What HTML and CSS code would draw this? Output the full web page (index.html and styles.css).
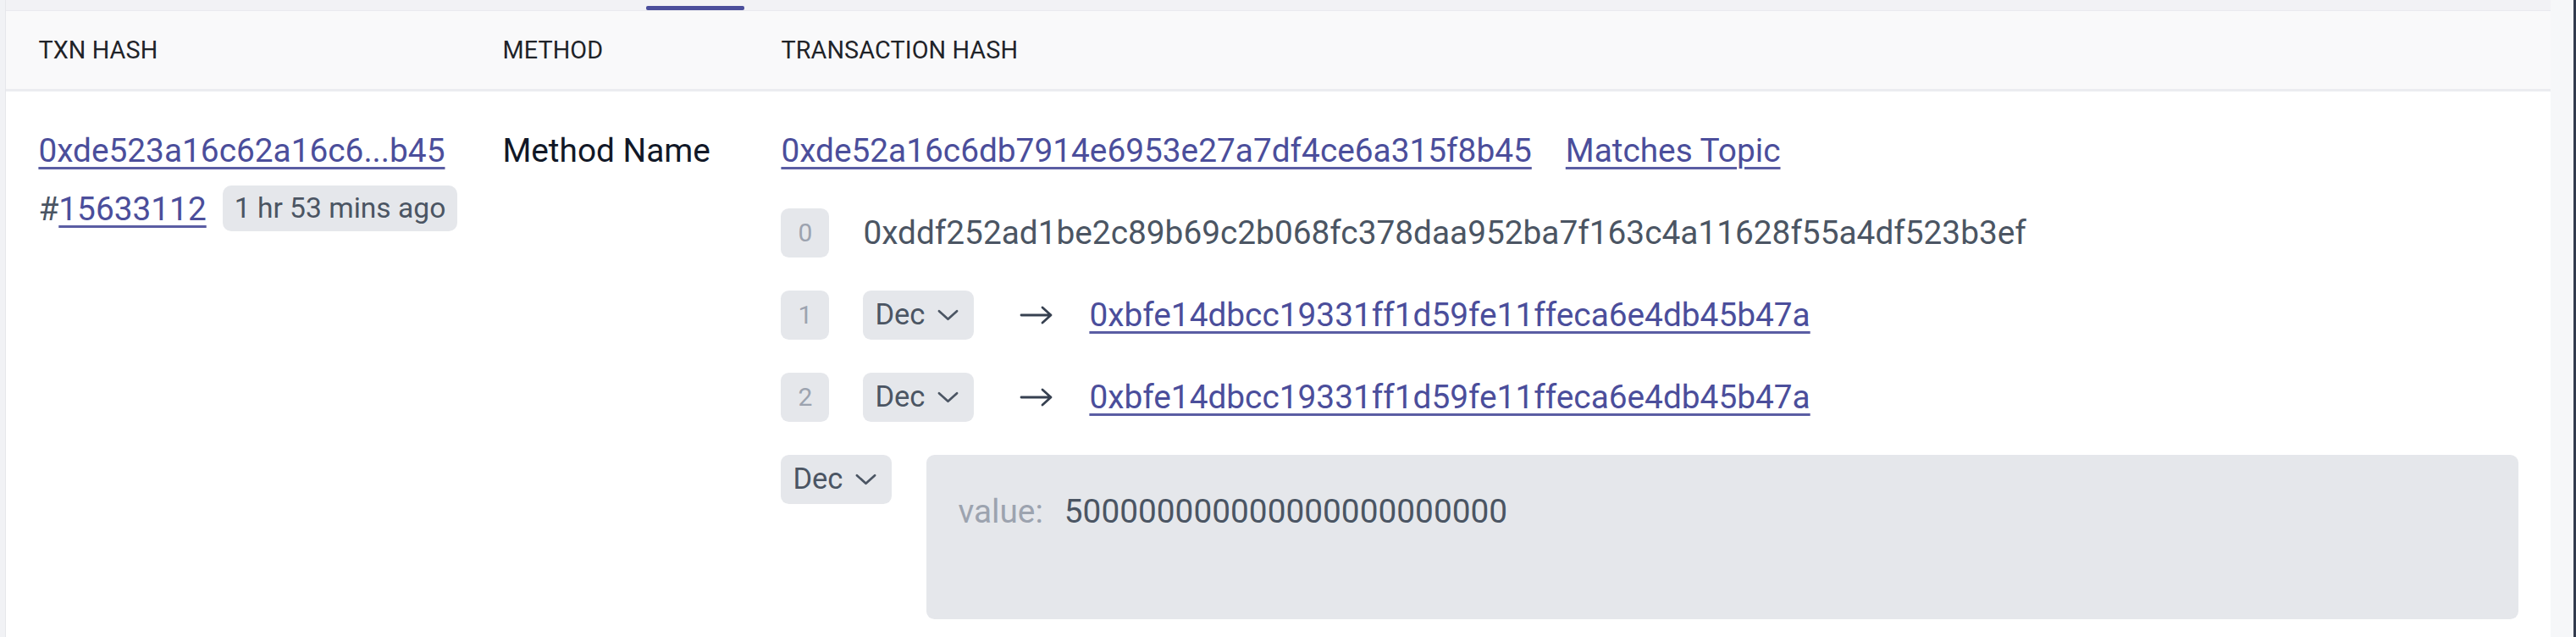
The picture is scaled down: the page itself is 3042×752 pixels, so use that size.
FILE: index.html
```html
<!DOCTYPE html>
<html lang="en">
<head>
<meta charset="utf-8">
<title>Logs</title>
<link rel="stylesheet" href="styles.css">
</head>
<body>
<div class="page">
  <div class="gutter-left"></div>
  <main class="panel">
    <div class="tabbar"><span class="tab-indicator"></span></div>
    <div class="table">
      <div class="thead">
        <div class="th">Txn Hash</div>
        <div class="th">Method</div>
        <div class="th">Transaction Hash</div>
      </div>
      <div class="tr">
        <div class="td col-txn">
          <div class="line"><a class="link" href="#">0xde523a16c62a16c6...b45</a></div>
          <div class="line block-line">
            <span class="hash-sign">#</span><a class="link" href="#">15633112</a>
            <span class="badge">1 hr 53 mins ago</span>
          </div>
        </div>
        <div class="td col-method">
          <div class="line method">Method Name</div>
        </div>
        <div class="td col-logs">
          <div class="log-row">
            <a class="link" href="#">0xde52a16c6db7914e6953e27a7df4ce6a315f8b45</a>
            <a class="link" href="#">Matches Topic</a>
          </div>
          <div class="log-row">
            <span class="idx">0</span>
            <span class="topic-text">0xddf252ad1be2c89b69c2b068fc378daa952ba7f163c4a11628f55a4df523b3ef</span>
          </div>
          <div class="log-row">
            <span class="idx">1</span>
            <span class="dropdown">Dec<svg class="chev" viewBox="0 0 26 14" width="25" height="14"><path d="M2 2 L13 12 L24 2"/></svg></span>
            <svg class="arrow" viewBox="0 0 40 24" width="40" height="24"><path d="M2 12 H37 M27 3 L37 12 L27 21"/></svg>
            <a class="link" href="#">0xbfe14dbcc19331ff1d59fe11ffeca6e4db45b47a</a>
          </div>
          <div class="log-row">
            <span class="idx">2</span>
            <span class="dropdown">Dec<svg class="chev" viewBox="0 0 26 14" width="25" height="14"><path d="M2 2 L13 12 L24 2"/></svg></span>
            <svg class="arrow" viewBox="0 0 40 24" width="40" height="24"><path d="M2 12 H37 M27 3 L37 12 L27 21"/></svg>
            <a class="link" href="#">0xbfe14dbcc19331ff1d59fe11ffeca6e4db45b47a</a>
          </div>
          <div class="log-row data-row">
            <span class="dropdown">Dec<svg class="chev" viewBox="0 0 26 14" width="25" height="14"><path d="M2 2 L13 12 L24 2"/></svg></span>
            <div class="data-box">
              <span class="data-label">value:</span>
              <span class="data-value">500000000000000000000000</span>
            </div>
          </div>
        </div>
      </div>
    </div>
  </main>
  <div class="gutter-right"></div>
</div>
</body>
</html>
```

FILE: styles.css
```css
* { box-sizing: border-box; }

html, body {
  margin: 0;
  padding: 0;
  background: #f6f7f9;
}

body {
  font-family: Roboto, "Liberation Sans", Arial, sans-serif;
  color: #111827;
  width: 3042px;
  height: 752px;
  overflow: hidden;
}

.page {
  display: flex;
  width: 3042px;
  height: 752px;
}

.gutter-left {
  width: 7px;
  flex: none;
  background: #f1f2f5;
  border-right: 1px solid #e7e8ec;
}

.gutter-right {
  width: 30px;
  flex: none;
  background: #f6f7f9;
  border-right: 3px solid #323b4e;
}

.panel {
  flex: 1;
  min-width: 0;
  display: flex;
  flex-direction: column;
  background: #ffffff;
  box-shadow: 2px 0 4px rgba(0, 0, 0, 0.04);
}

.tabbar {
  height: 13px;
  background: #f2f2f5;
  padding-left: 756px;
  display: flex;
  align-items: flex-start;
}

.tab-indicator {
  display: block;
  width: 116px;
  height: 5px;
  margin-top: 7px;
  background: #4b4e9b;
  border-radius: 2px;
}

.thead {
  display: grid;
  grid-template-columns: 548px 329px 1fr;
  height: 96px;
  background: #f9f9fa;
  border-top: 1px solid #eaeaef;
  border-bottom: 3px solid #ebecf0;
  align-items: center;
}

.th {
  padding: 0 38.4px;
  font-size: 28.8px;
  text-transform: uppercase;
  color: #1f2328;
  letter-spacing: 0.1px;
}

.tr {
  display: grid;
  grid-template-columns: 548px 329px 1fr;
  align-items: start;
  padding-top: 41px;
  padding-bottom: 40px;
}

.td {
  padding: 0 38.4px;
  font-size: 38.8px;
  line-height: 57.6px;
}

.line {
  display: flex;
  align-items: center;
  white-space: nowrap;
}

.block-line {
  margin-top: 11px;
}

.link {
  color: #4b4e9b;
  text-decoration: underline;
  text-decoration-thickness: 3px;
  text-underline-offset: 6px;
  text-decoration-color: #5a5da3;
}

.hash-sign {
  color: #4b5563;
}

.badge {
  margin-left: 19px;
  background: #e5e7eb;
  color: #4b5563;
  font-size: 33.6px;
  line-height: 50px;
  padding: 2px 14px;
  border-radius: 10px;
}

.method {
  color: #111827;
}

.col-logs {
  display: flex;
  flex-direction: column;
  gap: 39.4px;
}

.log-row {
  display: flex;
  align-items: center;
  gap: 40px;
  white-space: nowrap;
  height: 57.6px;
}

.idx {
  width: 57px;
  height: 57.6px;
  flex: none;
  display: flex;
  align-items: center;
  justify-content: center;
  background: #e5e7eb;
  border-radius: 9.6px;
  color: #9ca3af;
  font-size: 30px;
}

.topic-text {
  color: #4b5563;
}

.dropdown {
  display: inline-flex;
  align-items: center;
  gap: 15px;
  height: 57.6px;
  padding: 0 18px 0 14px;
  background: #e5e7eb;
  border-radius: 9.6px;
  color: #4b5563;
  font-size: 34.5px;
  flex: none;
}

.chev {
  fill: none;
  stroke: #4b5563;
  stroke-width: 2.8;
  stroke-linecap: round;
  stroke-linejoin: round;
}

.arrow {
  fill: none;
  stroke: #374151;
  stroke-width: 2.8;
  stroke-linecap: round;
  stroke-linejoin: round;
  margin: 0 2px 0 14px;
  flex: none;
}

.data-row {
  align-items: flex-start;
  height: auto;
  gap: 41px;
}

.data-box {
  flex: 1;
  min-height: 194px;
  background: #e5e7eb;
  border-radius: 9.6px;
  padding: 38px 37px;
  display: flex;
  align-items: flex-start;
  gap: 25px;
  font-size: 38.8px;
  line-height: 57.6px;
}

.data-label {
  color: #9ca3af;
}

.data-value {
  color: #4b5563;
}
```
